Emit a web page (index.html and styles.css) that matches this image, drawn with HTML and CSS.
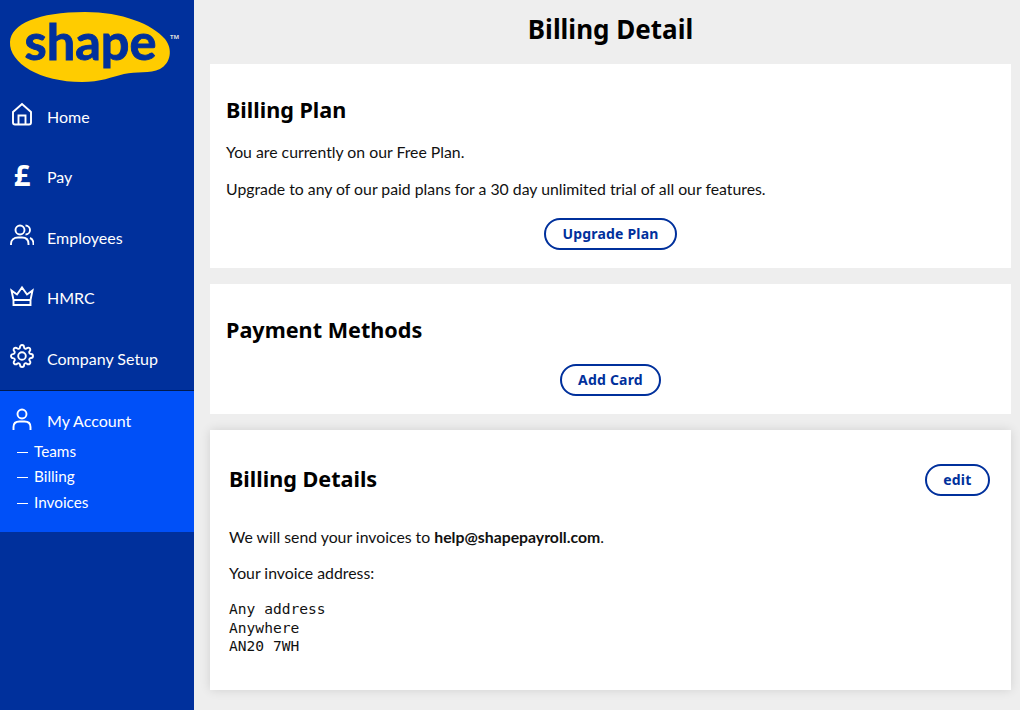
FILE: index.html
```html
<!DOCTYPE html>
<html lang="en">
<head>
    <meta charset="UTF-8">
    <title>Billing Detail</title>
    <link rel="stylesheet" href="styles.css">
</head>
<body>
    <nav class="sidebar">
        <div class="logo">
            <svg width="184" height="86" viewBox="0 0 184 86">
                <path fill="#ffcc00" d="M10 42C11 24 38 12 85 12C122 12 152 24 165 39C173 49 171 63 160 69C150 74 136 71 124 74C112 77 100 82 82 82C40 82 9 63 10 42Z"/>
                <text class="logo-word" x="24.500" y="60">shape</text>
                <text class="logo-tm" x="170" y="39">TM</text>
            </svg>
        </div>
        <a class="nav-item">
            <svg class="nav-icon" viewBox="0 0 24 24"><path d="M3 10 12 2l9 8V20.500a2 2 0 0 1-2 2H5a2 2 0 0 1-2-2ZM8.500 22.500V13.500h7v9"/></svg>
            <span>Home</span>
        </a>
        <a class="nav-item">
            <span class="nav-icon pound">£</span>
            <span>Pay</span>
        </a>
        <a class="nav-item">
            <svg class="nav-icon" viewBox="0 0 24 24"><circle cx="10" cy="7" r="4.500"/><path d="M1 22v-1c0-4 3-6.500 7-6.500h4c4 0 6.500 2.500 6.500 6.500v1M15.500 2.500a4.500 4.500 0 0 1 0 9M20 15c2.500 1 3.500 3 3.500 6v1"/></svg>
            <span>Employees</span>
        </a>
        <a class="nav-item">
            <svg class="nav-icon" viewBox="0 0 24 24"><path d="M3.500 16 1.500 6.500l5.500 4L12 3.500l5 7 5.500-4-2 9.500ZM3.500 16v5h17v-5"/></svg>
            <span>HMRC</span>
        </a>
        <a class="nav-item">
            <svg class="nav-icon" viewBox="0 0 24 24"><circle cx="12" cy="12" r="3.800"/><path d="M19.400 15a1.650 1.650 0 0 0 .33 1.820l.06.06a2 2 0 0 1 0 2.830 2 2 0 0 1-2.830 0l-.06-.06a1.650 1.650 0 0 0-1.820-.33 1.650 1.650 0 0 0-1 1.510V21a2 2 0 0 1-2 2 2 2 0 0 1-2-2v-.09A1.650 1.650 0 0 0 9 19.400a1.650 1.650 0 0 0-1.820.33l-.06.06a2 2 0 0 1-2.830 0 2 2 0 0 1 0-2.830l.06-.06a1.650 1.650 0 0 0 .33-1.820 1.650 1.650 0 0 0-1.510-1H3a2 2 0 0 1-2-2 2 2 0 0 1 2-2h.09A1.650 1.650 0 0 0 4.600 9a1.650 1.650 0 0 0-.33-1.820l-.06-.06a2 2 0 0 1 0-2.830 2 2 0 0 1 2.830 0l.06.06a1.650 1.650 0 0 0 1.820.33H9a1.650 1.650 0 0 0 1-1.510V3a2 2 0 0 1 2-2 2 2 0 0 1 2 2v.09a1.650 1.650 0 0 0 1 1.510 1.650 1.650 0 0 0 1.820-.33l.06-.06a2 2 0 0 1 2.830 0 2 2 0 0 1 0 2.830l-.06.06a1.650 1.650 0 0 0-.33 1.820V9a1.650 1.650 0 0 0 1.510 1H21a2 2 0 0 1 2 2 2 2 0 0 1-2 2h-.09a1.650 1.650 0 0 0-1.510 1z"/></svg>
            <span>Company Setup</span>
        </a>
        <div class="account">
            <a class="nav-item account-head">
                <svg class="nav-icon" viewBox="0 0 24 24"><circle cx="12" cy="7" r="4.500"/><path d="M3.500 23v-3c0-3.500 2.500-5.500 6-5.500h5c3.500 0 6 2 6 5.500v3"/></svg>
                <span>My Account</span>
            </a>
            <ul class="subnav">
                <li>Teams</li>
                <li>Billing</li>
                <li>Invoices</li>
            </ul>
        </div>
    </nav>

    <main class="content">
        <h1>Billing Detail</h1>

        <section class="card plan-card">
            <h2>Billing Plan</h2>
            <p>You are currently on our Free Plan.</p>
            <p>Upgrade to any of our paid plans for a 30 day unlimited trial of all our features.</p>
            <div class="actions"><button class="btn">Upgrade Plan</button></div>
        </section>

        <section class="card methods-card">
            <h2>Payment Methods</h2>
            <div class="actions"><button class="btn">Add Card</button></div>
        </section>

        <section class="card details-card">
            <div class="details-head">
                <h2>Billing Details</h2>
                <button class="btn">edit</button>
            </div>
            <p>We will send your invoices to <strong>help@shapepayroll.com</strong>.</p>
            <p>Your invoice address:</p>
            <pre>Any address
Anywhere
AN20 7WH</pre>
        </section>
    </main>
</body>
</html>
```

FILE: styles.css
```css
html, body {
    height: 100%;
}
body {
    margin: 0;
    display: flex;
    overflow: hidden;
    background-color: #eeeeee;
    color: #111111;
    font-family: Lato, sans-serif;
    font-size: 15.800px;
}
.sidebar {
    width: 194px;
    flex-shrink: 0;
    background-color: #00309c;
    color: white;
}
.logo {
    height: 86px;
}
.logo svg {
    display: block;
}
.logo-word {
    font-family: Lato, sans-serif;
    font-weight: 700;
    font-size: 50.500px;
    fill: #00309c;
    stroke: #00309c;
    stroke-width: 0.900;
}
.logo-tm {
    font-family: "Noto Sans", sans-serif;
    font-weight: 700;
    font-size: 6px;
    fill: #dddddd;
}
.nav-item {
    display: flex;
    align-items: center;
    height: 60.500px;
    padding-left: 10px;
    font-size: 16px;
}
.nav-icon {
    width: 24px;
    height: 24px;
    margin-top: -4px;
    margin-right: 13px;
    flex-shrink: 0;
    fill: none;
    stroke: white;
    stroke-width: 1.900;
}
.pound {
    font-family: "Noto Sans", sans-serif;
    font-weight: 700;
    font-size: 29px;
    line-height: 24px;
    text-align: center;
}
.account {
    height: 141px;
    margin-top: 1.500px;
    border-top: 1px solid #001a4d;
    background-color: #0050f8;
}
.account-head {
    height: 59px;
}
.subnav {
    list-style: none;
    margin: -11.500px 0 0;
    padding: 0 0 0 17px;
    font-size: 15.300px;
}
.subnav li {
    height: 25.500px;
    line-height: 25.500px;
}
.subnav li::before {
    content: "";
    display: inline-block;
    width: 11px;
    height: 1px;
    margin-right: 6px;
    background-color: white;
    vertical-align: 4px;
}
.content {
    flex: 1;
    padding: 0 9px 0 16px;
}
h1 {
    margin: 0;
    height: 64px;
    line-height: 58px;
    text-align: center;
    font-family: "Noto Sans", sans-serif;
    font-weight: 700;
    font-size: 26px;
    color: black;
}
h2 {
    margin: 0;
    font-family: "Noto Sans", sans-serif;
    font-weight: 700;
    font-size: 21.600px;
    line-height: 30px;
    color: black;
}
p {
    margin: 0 0 15px;
    line-height: 22px;
}
.card {
    background-color: white;
    padding: 0 16px;
    margin-bottom: 16px;
    box-sizing: border-box;
}
.plan-card {
    height: 204px;
    padding-top: 31px;
}
.plan-card h2 {
    margin-bottom: 16px;
}
.plan-card .actions {
    margin-top: 18px;
}
.methods-card {
    height: 130px;
    padding-top: 31px;
}
.methods-card h2 {
    margin-bottom: 19px;
}
.details-card {
    height: 260px;
    padding: 34px 21px 0 19px;
    box-shadow: 0 0 10px rgba(0, 0, 0, 0.12);
}
.details-card p {
    margin-bottom: 14px;
}
.details-head {
    display: flex;
    justify-content: space-between;
    align-items: center;
    margin-bottom: 30px;
}
.details-head h2 {
    margin-top: -2px;
}
.actions {
    display: flex;
    justify-content: center;
}
.btn {
    height: 32px;
    padding: 0 16.500px;
    background-color: white;
    border: 2px solid #00309c;
    border-radius: 16px;
    color: #00309c;
    font-family: "Noto Sans", sans-serif;
    font-weight: 700;
    font-size: 14px;
    letter-spacing: 0.200px;
    line-height: 24px;
}
pre {
    margin: 16px 0 0;
    font-family: "DejaVu Sans Mono", monospace;
    font-size: 14.600px;
    line-height: 18.500px;
}
```
